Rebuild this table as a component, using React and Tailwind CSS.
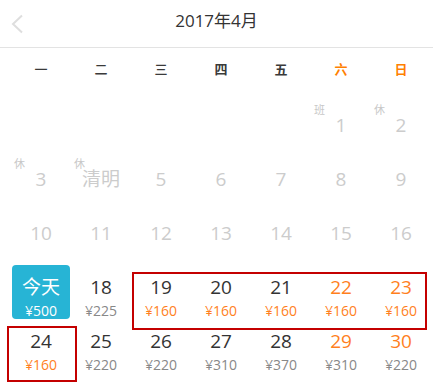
import React from 'react';

const weekdays = [
  { label: '一' },
  { label: '二' },
  { label: '三' },
  { label: '四', bold: true },
  { label: '五', bold: true },
  { label: '六', weekend: true, bold: true },
  { label: '日', weekend: true, bold: true },
];

// each row of the month grid; null = blank cell
const rows = [
  [null, null, null, null, null, { d: '1', tag: '班', past: true }, { d: '2', tag: '休', past: true }],
  [
    { d: '3', tag: '休', past: true },
    { d: '清明', tag: '休', past: true },
    { d: '5', past: true },
    { d: '6', past: true },
    { d: '7', past: true },
    { d: '8', past: true },
    { d: '9', past: true },
  ],
  ['10', '11', '12', '13', '14', '15', '16'].map(d => ({ d, past: true })),
  [
    { d: '今天', price: '¥500', today: true },
    { d: '18', price: '¥225' },
    { d: '19', price: '¥160', low: true },
    { d: '20', price: '¥160', low: true },
    { d: '21', price: '¥160', low: true },
    { d: '22', price: '¥160', low: true, weekend: true },
    { d: '23', price: '¥160', low: true, weekend: true },
  ],
  [
    { d: '24', price: '¥160', low: true },
    { d: '25', price: '¥220' },
    { d: '26', price: '¥220' },
    { d: '27', price: '¥310' },
    { d: '28', price: '¥370' },
    { d: '29', price: '¥310', weekend: true },
    { d: '30', price: '¥220', weekend: true },
  ],
];

function DayCell({ cell }) {
  if (!cell) return <div className="h-[54px]" />;

  if (cell.today) {
    return (
      <div className="h-[54px] px-px">
        <div className="h-full rounded-[4px] bg-[#27b4d5] flex flex-col items-center text-white">
          <span className="text-[19px] leading-none mt-[13px]">{cell.d}</span>
          <span className="text-[14px] leading-none mt-[7px]">{cell.price}</span>
        </div>
      </div>
    );
  }

  let numColor = 'text-[#333333]';
  if (cell.past) numColor = 'text-[#cccccc]';
  else if (cell.weekend) numColor = 'text-[#ff7f1e]';

  return (
    <div className="relative h-[54px] flex flex-col items-center">
      {cell.tag && (
        <span className="absolute left-[3px] top-px text-[11px] leading-none text-[#c8c8c8]">{cell.tag}</span>
      )}
      <span className={`text-[19px] leading-none mt-[13px] ${numColor}`}>{cell.d}</span>
      {cell.price && (
        <span className={`text-[14px] leading-none mt-[7px] ${cell.low ? 'text-[#ff7f1e]' : 'text-[#888888]'}`}>
          {cell.price}
        </span>
      )}
    </div>
  );
}

export default function App() {
  return (
    <div className="relative w-[433px] h-[392px] bg-white overflow-hidden font-['Open_Sans','Noto_Sans_CJK_SC',sans-serif]">
      {/* header */}
      <div className="relative h-12 flex items-center justify-center border-b border-[#e3e3e3]">
        <svg className="absolute left-[10px] top-[14px]" width="14" height="20" viewBox="0 0 14 20">
          <path d="M12 1.5 L3 10 L12 18.5" fill="none" stroke="#dedede" strokeWidth="2" />
        </svg>
        <span className="text-[17px] text-[#333333] -mt-[5px]">2017年4月</span>
      </div>

      <div className="pl-[11px] pr-[2px]">
        {/* weekday labels */}
        <div className="grid grid-cols-7 h-11 items-center">
          {weekdays.map(w => (
            <span
              key={w.label}
              className={`text-center text-[13px] ${w.bold ? 'font-bold' : 'font-medium'} ${w.weekend ? 'text-[#ff8000]' : 'text-[#3a3a3a]'}`}
            >
              {w.label}
            </span>
          ))}
        </div>

        {/* month grid */}
        <div className="grid grid-cols-7 mt-[11px]">
          {rows.flatMap((row, r) => row.map((cell, c) => <DayCell key={`${r}-${c}`} cell={cell} />))}
        </div>
      </div>

      {/* annotation boxes */}
      <div className="absolute left-[132px] top-[272px] w-[295px] h-[58px] border-2 border-[#c40000]" />
      <div className="absolute left-[7px] top-[326px] w-[70px] h-[56px] border-2 border-[#c40000]" />
    </div>
  );
}
